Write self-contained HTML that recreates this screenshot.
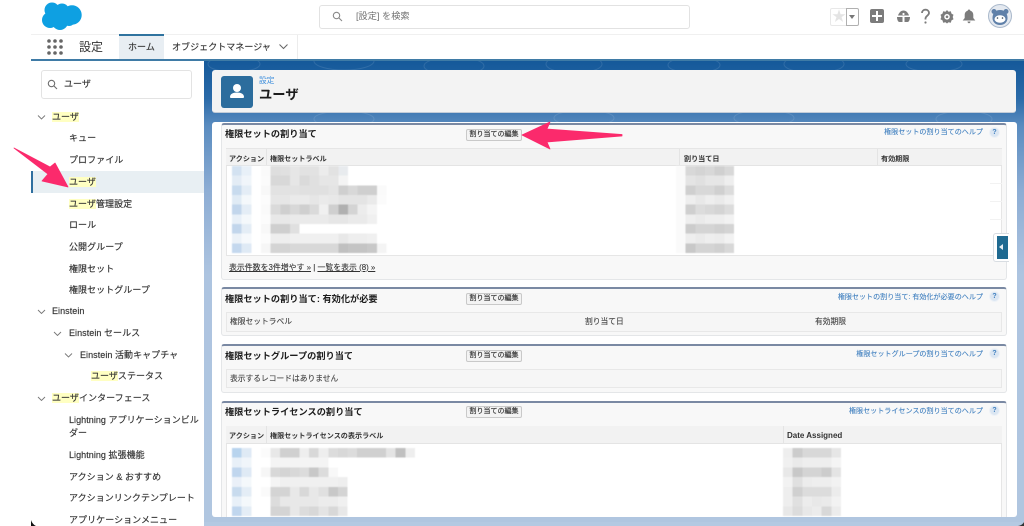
<!DOCTYPE html>
<html lang="ja">
<head>
<meta charset="utf-8">
<title>ユーザ</title>
<style>
html,body{margin:0;padding:0;background:#fff}
body{width:1024px;height:526px;overflow:hidden;position:relative;font-family:"Liberation Sans","Noto Sans CJK JP",sans-serif;color:#3e3e3c}
#w{position:absolute;left:0;top:0;width:1024px;height:526px;overflow:hidden;filter:blur(.35px)}
.a{position:absolute}
.t{position:absolute;white-space:nowrap;line-height:14px;height:14px}
.s{font-size:9px;color:#333;letter-spacing:.05px;-webkit-text-stroke:.15px #333}
mark{background:#ffffc2;color:inherit}
.p{position:absolute;left:221px;width:784px;background:#f8f8f8;border:1px solid #e4e6e8;border-top:2px solid #7a89a3;border-radius:3px;box-sizing:content-box}
.h{font-size:9.2px;font-weight:700;color:#1c1c1c}
.b{position:absolute;left:466px;width:54px;height:10px;background:#f3f3f3;border:1px solid #c9c9c9;border-radius:2px;font-size:7px;line-height:10px;text-align:center;color:#333;white-space:nowrap;-webkit-text-stroke:.15px #333}
.l{font-size:7.07px;color:#3f7fbf;text-align:right;right:41px;-webkit-text-stroke:.1px #3f7fbf}
.q{position:absolute;left:989px;width:9px;height:9px;border-radius:50%;background:#dbe6f2;border:1px solid #eef2f7;font-size:7px;line-height:9px;text-align:center;color:#3f7fbf;font-weight:700}
.th{font-size:7.1px;font-weight:700;color:#333}
.r{font-size:7.75px;color:#444;-webkit-text-stroke:.12px #444}
.g{filter:blur(.5px)}
</style>
</head>
<body>
<div id="w">
<!-- header -->
<div class="a" style="left:31px;top:34px;width:993px;height:1px;background:#f0f0f0"></div>
<svg class="a" style="left:40px;top:0" width="44" height="32" viewBox="0 0 44 32"><g fill="#0ea0e2"><circle cx="12" cy="10" r="7.5"/><circle cx="22" cy="10.5" r="7"/><circle cx="32" cy="15" r="9.700"/><circle cx="10" cy="20" r="8"/><circle cx="20" cy="22" r="8"/><circle cx="29" cy="20" r="6"/><rect x="10" y="10" width="20" height="12"/></g></svg>
<div class="a" style="left:319px;top:5px;width:369px;height:22px;border:1px solid #e2e2e2;border-radius:3px"></div>
<svg class="a" style="left:332px;top:11px" width="11" height="11" viewBox="0 0 11 11" fill="none" stroke="#8a8a8a" stroke-width="1.1"><circle cx="4.500" cy="4.500" r="3.200"/><path d="M7 7l3 3"/></svg>
<div class="t" style="left:356px;top:9px;font-size:9.2px;color:#707070">[設定] を検索</div>

<div class="a" style="left:830px;top:8px;width:15px;height:16px;border:1px solid #e8e8e8;border-radius:2px 0 0 2px"></div>
<div class="a" style="left:832px;top:8px;font-size:14px;line-height:17px;color:#e4e4e4">★</div>
<div class="a" style="left:846px;top:8px;width:11px;height:16px;border:1px solid #b0b0b0;border-radius:0 2px 2px 0"></div>
<div class="a" style="left:849px;top:15px;width:0;height:0;border:3px solid transparent;border-top:4px solid #777;border-bottom:0"></div>
<div class="a" style="left:870px;top:9px;width:14px;height:14px;background:#7c7c7c;border-radius:2px"></div>
<div class="a" style="left:876px;top:11px;width:2px;height:10px;background:#fff"></div>
<div class="a" style="left:872px;top:15px;width:10px;height:2px;background:#fff"></div>
<svg class="a" style="left:896px;top:9px" width="15" height="15" viewBox="0 0 15 15"><path d="M7.500 1.500c2.500 0 4.500 2 5.500 5H2C3 3.500 5 1.500 7.500 1.500z" fill="#7c7c7c"/><path d="M1 8h5.500v5H3.500C2 13 1 10.500 1 8zM14 8H8.500v5h3c1.500 0 2.500-2.500 2.500-5z" fill="#7c7c7c"/><circle cx="7.500" cy="5" r="1.100" fill="#fff"/></svg>
<svg class="a" style="left:920px;top:8px" width="11" height="17" viewBox="0 0 11 17" fill="none" stroke="#7c7c7c" stroke-width="1.800"><path d="M2 5c0-2 1.500-3.300 3.500-3.300S9 3 9 5c0 2.500-3.500 2.800-3.500 5.500v1"/><circle cx="5.500" cy="14.500" r="1.100" fill="#7c7c7c" stroke="none"/></svg>
<svg class="a" style="left:940px;top:9px" width="14" height="15" viewBox="0 0 14 15"><path d="M7 1l1.500 1.800 2.300-.5.700 2.300 2 1.100L12.700 8l.8 2.300-2 1.100-.7 2.300-2.300-.5L7 14.500l-1.500-1.300-2.300.5-.7-2.300-2-1.100L1.300 8 .5 5.700l2-1.100.7-2.300 2.300.5z" fill="#7c7c7c"/><circle cx="7" cy="7.800" r="2.800" fill="#fff"/><circle cx="7" cy="7.800" r="1.300" fill="#7c7c7c"/></svg>
<svg class="a" style="left:962px;top:9px" width="14" height="15" viewBox="0 0 14 15"><path d="M7 0.500c.8 0 1.300.5 1.300 1.200C10.500 2.300 11.300 4 11.300 6v3l2 2.500H.7l2-2.500V6c0-2 .8-3.700 3-4.300C5.700 1 6.200.5 7 .5z" fill="#7c7c7c"/><path d="M5.500 12.500h3c0 1-.7 1.700-1.500 1.700s-1.500-.7-1.500-1.700z" fill="#7c7c7c"/></svg>
<svg class="a" style="left:988px;top:4px" width="24" height="24" viewBox="0 0 24 24"><circle cx="12" cy="12" r="11.500" fill="#e4e9f0" stroke="#a9b8cb"/><circle cx="6" cy="7.500" r="2.500" fill="#5f80a9"/><circle cx="18" cy="7.500" r="2.500" fill="#5f80a9"/><path d="M4.500 14c0-5 3-8 7.500-8s7.500 3 7.500 8c0 4-3 7-7.500 7s-7.500-3-7.500-7z" fill="#5f80a9"/><ellipse cx="12" cy="15" rx="5.500" ry="3.800" fill="#fff"/><circle cx="9.500" cy="14" r=".8" fill="#345"/><circle cx="14.500" cy="14" r=".8" fill="#345"/></svg>

<!-- nav -->
<svg class="a" style="left:47px;top:39px" width="16" height="16" fill="#666"><circle cx="2" cy="2" r="1.800"/><circle cx="8" cy="2" r="1.800"/><circle cx="14" cy="2" r="1.800"/><circle cx="2" cy="8" r="1.800"/><circle cx="8" cy="8" r="1.800"/><circle cx="14" cy="8" r="1.800"/><circle cx="2" cy="14" r="1.800"/><circle cx="8" cy="14" r="1.800"/><circle cx="14" cy="14" r="1.800"/></svg>
<div class="t" style="left:79px;top:39px;font-size:12px;line-height:16px;height:16px;color:#333">設定</div>
<div class="a" style="left:119px;top:34px;width:45px;height:25px;background:#e8eef3;border-top:2px solid #2f739f;box-sizing:border-box"></div>
<div class="t s" style="left:128px;top:40px">ホーム</div>
<div class="t s" style="left:172px;top:40px">オブジェクトマネージャ</div>
<svg class="a" style="left:279px;top:44px" width="9" height="6" fill="none" stroke="#666" stroke-width="1"><path d="M.5 .5L4.500 4.500 8.500 .5"/></svg>
<div class="a" style="left:297px;top:35px;width:1px;height:24px;background:#ececec"></div>
<div class="a" style="left:31px;top:59px;width:993px;height:2px;background:#3f7ba6"></div>

<!-- main background -->
<div class="a" style="left:204px;top:61px;width:820px;height:465px;background:linear-gradient(180deg,#15599a 0,#2a6aa8 8%,#5a8cc0 14%,#8dadd4 28%,#adc4e0 46%,#b0c6e0 100%)"></div>
<svg class="a" style="left:204px;top:61px;opacity:.1" width="820" height="110" fill="none" stroke="#fff" stroke-width="1"><ellipse cx="30" cy="3" rx="26" ry="8"/><ellipse cx="140" cy="0" rx="30" ry="9"/><ellipse cx="250" cy="5" rx="30" ry="9"/><ellipse cx="370" cy="3" rx="28" ry="9"/><ellipse cx="490" cy="4" rx="26" ry="8"/><ellipse cx="610" cy="3" rx="30" ry="9"/><ellipse cx="730" cy="3" rx="28" ry="8"/><ellipse cx="380" cy="57" rx="30" ry="8"/><ellipse cx="140" cy="58" rx="30" ry="8"/><ellipse cx="560" cy="57" rx="30" ry="8"/><ellipse cx="760" cy="58" rx="28" ry="8"/></svg>

<!-- sidebar -->
<div class="a" style="left:31px;top:61px;width:173px;height:465px;background:#fff"></div>
<div class="a" style="left:41px;top:70px;width:149px;height:27px;border:1px solid #e3e3e3;border-radius:3px"></div>
<svg class="a" style="left:47px;top:79px" width="11" height="11" fill="none" stroke="#6e6e6e" stroke-width="1.100"><circle cx="4.500" cy="4.500" r="3.200"/><path d="M7 7l3 3"/></svg>
<div class="t s" style="left:64px;top:77px">ユーザ</div>

<div class="a" style="left:33px;top:171px;width:171px;height:22px;background:#e8eff3"></div>
<div class="a" style="left:31px;top:171px;width:2px;height:22px;background:#2f6f9f"></div>

<svg class="a" style="left:0;top:0" width="204" height="526" fill="none" stroke="#777" stroke-width=".9"><path d="M38 115.500l3.500 3.500 3.500-3.500M38 310l3.500 3.500 3.500-3.500M54 332l3.500 3.500 3.500-3.500M65 353.500l3.500 3.500 3.500-3.500M38 397l3.500 3.500 3.500-3.500"/></svg>

<div class="t s" style="left:52px;top:110px"><mark>ユーザ</mark></div>
<div class="t s" style="left:69px;top:131px">キュー</div>
<div class="t s" style="left:69px;top:153px">プロファイル</div>
<div class="t s" style="left:69px;top:175px"><mark>ユーザ</mark></div>
<div class="t s" style="left:69px;top:197px"><mark>ユーザ</mark>管理設定</div>
<div class="t s" style="left:69px;top:218px">ロール</div>
<div class="t s" style="left:69px;top:240px">公開グループ</div>
<div class="t s" style="left:69px;top:262px">権限セット</div>
<div class="t s" style="left:69px;top:283px">権限セットグループ</div>
<div class="t s" style="left:52px;top:304px">Einstein</div>
<div class="t s" style="left:69px;top:326px">Einstein セールス</div>
<div class="t s" style="left:80px;top:348px">Einstein 活動キャプチャ</div>
<div class="t s" style="left:91px;top:369px"><mark>ユーザ</mark>ステータス</div>
<div class="t s" style="left:52px;top:391px"><mark>ユーザ</mark>インターフェース</div>
<div class="t s" style="left:69px;top:413px">Lightning アプリケーションビル</div>
<div class="t s" style="left:69px;top:426px">ダー</div>
<div class="t s" style="left:69px;top:448px">Lightning 拡張機能</div>
<div class="t s" style="left:69px;top:470px">アクション &amp; おすすめ</div>
<div class="t s" style="left:69px;top:491px">アクションリンクテンプレート</div>
<div class="t s" style="left:69px;top:513px">アプリケーションメニュー</div>

<!-- page header -->
<div class="a" style="left:212px;top:70px;width:804px;height:43px;background:#f3f3f3;border-radius:3px;border-bottom:1px solid #c2ccd8;box-sizing:border-box"></div>
<div class="a" style="left:221px;top:76px;width:32px;height:32px;background:#2c6d9d;border-radius:3px"></div>
<svg class="a" style="left:228px;top:82px" width="18" height="18" fill="#fff"><circle cx="9" cy="6" r="4"/><path d="M2 15c0-3 3-4.500 7-4.500s7 1.500 7 4.500c0 .6-.4 1-1 1H3c-.6 0-1-.4-1-1z"/></svg>
<div class="t" style="left:259px;top:75px;font-size:7.700px;line-height:12px;height:12px;color:#3f8fdc">設定</div>
<div class="t" style="left:259px;top:85px;font-size:13.300px;line-height:19px;height:19px;font-weight:700;color:#1c1c1c">ユーザ</div>

<!-- card -->
<div class="a" style="left:212px;top:122px;width:805px;height:395px;background:#fff;border-radius:3px"></div>

<!-- panel 1 -->
<div class="p" style="top:123px;height:154px"></div>
<div class="t h" style="left:225px;top:127px">権限セットの割り当て</div>
<div class="b" style="top:129px">割り当ての編集</div>
<div class="t l" style="top:126px;right:41px">権限セットの割り当てのヘルプ</div>
<div class="q" style="top:127px">?</div>
<div class="a" style="left:226px;top:148px;width:776px;height:108px;background:#fff;border:1px solid #e6e6e6;box-sizing:border-box"></div>
<div class="a" style="left:226px;top:149px;width:776px;height:17px;background:#f2f2f2;border-bottom:1px solid #e4e4e4;box-sizing:border-box"></div>
<div class="a" style="left:266px;top:149px;width:1px;height:17px;background:#e4e4e4"></div>
<div class="a" style="left:679px;top:149px;width:1px;height:17px;background:#e4e4e4"></div>
<div class="a" style="left:877px;top:149px;width:1px;height:17px;background:#e4e4e4"></div>
<div class="t th" style="left:229px;top:152px">アクション</div>
<div class="t th" style="left:270px;top:152px">権限セットラベル</div>
<div class="t th" style="left:684px;top:152px">割り当て日</div>
<div class="t th" style="left:881px;top:152px">有効期限</div>

<svg class="a g" style="left:231.700px;top:166px" width="170" height="87" viewBox="0 0 17.600 9" shape-rendering="crispEdges" preserveAspectRatio="none">
<rect x="0" y="0" width="1" height="1" fill="#d3e2f1"/><rect x="1" y="0" width="1" height="1" fill="#e8f0f8"/><rect x="3" y="0" width="1" height="1" fill="#fafafa"/><rect x="4" y="0" width="1" height="1" fill="#dedede"/><rect x="5" y="0" width="1" height="1" fill="#e0e0e0"/><rect x="6" y="0" width="1" height="1" fill="#e6e6e6"/><rect x="7" y="0" width="2" height="1" fill="#e2e2e2"/><rect x="9" y="0" width="1" height="1" fill="#ececec"/><rect x="10" y="0" width="1" height="1" fill="#e2e2e2"/><rect x="11" y="0" width="1" height="1" fill="#e8ebee"/>
<rect x="0" y="1" width="1" height="1" fill="#e3ecf5"/><rect x="1" y="1" width="1" height="1" fill="#f0f5fa"/><rect x="3" y="1" width="1" height="1" fill="#fbfbfb"/><rect x="4" y="1" width="2" height="1" fill="#d8d8d8"/><rect x="6" y="1" width="1" height="1" fill="#e6e6e6"/><rect x="7" y="1" width="1" height="1" fill="#dadada"/><rect x="8" y="1" width="1" height="1" fill="#e0e0e0"/><rect x="9" y="1" width="2" height="1" fill="#e6e6e6"/><rect x="11" y="1" width="1" height="1" fill="#f4f4f4"/>
<rect x="0" y="2" width="1" height="1" fill="#c8dbee"/><rect x="1" y="2" width="1" height="1" fill="#e4edf6"/><rect x="3" y="2" width="1" height="1" fill="#f8f8f8"/><rect x="4" y="2" width="3" height="1" fill="#e2e2e2"/><rect x="7" y="2" width="3" height="1" fill="#e0e0e0"/><rect x="10" y="2" width="1" height="1" fill="#e4e4e4"/><rect x="11" y="2" width="1" height="1" fill="#cfcfcf"/><rect x="12" y="2" width="1" height="1" fill="#d8d8d8"/><rect x="13" y="2" width="2" height="1" fill="#cfcfcf"/><rect x="15" y="2" width="1" height="1" fill="#fafafa"/>
<rect x="0" y="3" width="1" height="1" fill="#e0ebf5"/><rect x="1" y="3" width="1" height="1" fill="#f4f8fb"/><rect x="3" y="3" width="1" height="1" fill="#fcfcfc"/><rect x="4" y="3" width="2" height="1" fill="#e6e6e6"/><rect x="6" y="3" width="2" height="1" fill="#eaeaea"/><rect x="8" y="3" width="1" height="1" fill="#e6e6e6"/><rect x="9" y="3" width="1" height="1" fill="#eaeaea"/><rect x="10" y="3" width="1" height="1" fill="#e8e8e8"/><rect x="11" y="3" width="3" height="1" fill="#e4e4e4"/><rect x="14" y="3" width="1" height="1" fill="#eaeaea"/><rect x="15" y="3" width="1" height="1" fill="#fbfbfb"/>
<rect x="0" y="4" width="1" height="1" fill="#c2d6ec"/><rect x="1" y="4" width="1" height="1" fill="#e4edf6"/><rect x="3" y="4" width="1" height="1" fill="#fafafa"/><rect x="4" y="4" width="1" height="1" fill="#dadada"/><rect x="5" y="4" width="1" height="1" fill="#cfcfcf"/><rect x="6" y="4" width="1" height="1" fill="#d8d8d8"/><rect x="7" y="4" width="1" height="1" fill="#cfcfcf"/><rect x="8" y="4" width="1" height="1" fill="#dadada"/><rect x="9" y="4" width="1" height="1" fill="#f0f0f0"/><rect x="10" y="4" width="1" height="1" fill="#cfcfcf"/><rect x="11" y="4" width="1" height="1" fill="#b0b0b0"/><rect x="12" y="4" width="1" height="1" fill="#d4d4d4"/><rect x="13" y="4" width="1" height="1" fill="#ececec"/><rect x="14" y="4" width="1" height="1" fill="#f4f4f4"/>
<rect x="0" y="5" width="1" height="1" fill="#e8f0f8"/><rect x="1" y="5" width="1" height="1" fill="#f4f8fb"/><rect x="3" y="5" width="1" height="1" fill="#fcfcfc"/><rect x="4" y="5" width="2" height="1" fill="#e8e8e8"/><rect x="6" y="5" width="4" height="1" fill="#eaeaea"/><rect x="10" y="5" width="2" height="1" fill="#e6e6e6"/><rect x="12" y="5" width="2" height="1" fill="#eaeaea"/><rect x="14" y="5" width="1" height="1" fill="#f0f0f0"/>
<rect x="0" y="6" width="1" height="1" fill="#c2d6ec"/><rect x="1" y="6" width="1" height="1" fill="#e4edf6"/><rect x="3" y="6" width="1" height="1" fill="#f8f8f8"/><rect x="4" y="6" width="2" height="1" fill="#cfcfcf"/><rect x="6" y="6" width="1" height="1" fill="#e0e0e0"/>
<rect x="0" y="7" width="1" height="1" fill="#ecf2f8"/><rect x="1" y="7" width="1" height="1" fill="#f6f9fc"/><rect x="3" y="7" width="1" height="1" fill="#fcfcfc"/><rect x="4" y="7" width="2" height="1" fill="#eeeeee"/><rect x="6" y="7" width="5" height="1" fill="#f0f0f0"/><rect x="11" y="7" width="1" height="1" fill="#e8e8e8"/><rect x="12" y="7" width="2" height="1" fill="#eeeeee"/><rect x="14" y="7" width="1" height="1" fill="#f0f0f0"/>
<rect x="0" y="8" width="1" height="1" fill="#c4d8ee"/><rect x="1" y="8" width="1" height="1" fill="#dfeaf5"/><rect x="3" y="8" width="1" height="1" fill="#f6f6f6"/><rect x="4" y="8" width="2" height="1" fill="#d4d4d4"/><rect x="6" y="8" width="5" height="1" fill="#d8d8d8"/><rect x="11" y="8" width="1" height="1" fill="#c0c0c0"/><rect x="12" y="8" width="2" height="1" fill="#c4c4c4"/><rect x="14" y="8" width="1" height="1" fill="#c8c8c8"/><rect x="15" y="8" width="1" height="1" fill="#f4f4f4"/>
</svg>

<svg class="a g" style="left:676px;top:166px" width="58" height="87" viewBox="0 0 6 9" shape-rendering="crispEdges" preserveAspectRatio="none">
<rect x="0" y="0" width="1" height="9" fill="#fafafa"/>
<rect x="1" y="0" width="1" height="1" fill="#d8d8d8"/><rect x="2" y="0" width="1" height="1" fill="#d4d4d4"/><rect x="3" y="0" width="1" height="1" fill="#d8d8d8"/><rect x="4" y="0" width="1" height="1" fill="#d0d0d0"/><rect x="5" y="0" width="1" height="1" fill="#d8d8d8"/>
<rect x="1" y="1" width="1" height="1" fill="#e4e4e4"/><rect x="2" y="1" width="1" height="1" fill="#e0e0e0"/><rect x="3" y="1" width="2" height="1" fill="#e6e6e6"/><rect x="5" y="1" width="1" height="1" fill="#eeeeee"/>
<rect x="1" y="2" width="1" height="1" fill="#cfcfcf"/><rect x="2" y="2" width="2" height="1" fill="#d8d8d8"/><rect x="4" y="2" width="1" height="1" fill="#d0d0d0"/><rect x="5" y="2" width="1" height="1" fill="#dcdcdc"/>
<rect x="1" y="3" width="1" height="1" fill="#eeeeee"/><rect x="2" y="3" width="1" height="1" fill="#e8e8e8"/><rect x="3" y="3" width="1" height="1" fill="#eeeeee"/><rect x="4" y="3" width="1" height="1" fill="#eaeaea"/><rect x="5" y="3" width="1" height="1" fill="#f0f0f0"/>
<rect x="1" y="4" width="1" height="1" fill="#cfcfcf"/><rect x="2" y="4" width="1" height="1" fill="#dcdcdc"/><rect x="3" y="4" width="1" height="1" fill="#d8d8d8"/><rect x="4" y="4" width="1" height="1" fill="#d4d4d4"/><rect x="5" y="4" width="1" height="1" fill="#dcdcdc"/>
<rect x="1" y="5" width="1" height="1" fill="#eeeeee"/><rect x="2" y="5" width="1" height="1" fill="#eaeaea"/><rect x="3" y="5" width="2" height="1" fill="#eeeeee"/><rect x="5" y="5" width="1" height="1" fill="#f2f2f2"/>
<rect x="1" y="6" width="1" height="1" fill="#cccccc"/><rect x="2" y="6" width="2" height="1" fill="#d4d4d4"/><rect x="4" y="6" width="1" height="1" fill="#d0d0d0"/><rect x="5" y="6" width="1" height="1" fill="#d4d4d4"/>
<rect x="1" y="7" width="1" height="1" fill="#eeeeee"/><rect x="2" y="7" width="1" height="1" fill="#eaeaea"/><rect x="3" y="7" width="1" height="1" fill="#eeeeee"/><rect x="4" y="7" width="1" height="1" fill="#ececec"/><rect x="5" y="7" width="1" height="1" fill="#f2f2f2"/>
<rect x="1" y="8" width="1" height="1" fill="#c8c8c8"/><rect x="2" y="8" width="2" height="1" fill="#d4d4d4"/><rect x="4" y="8" width="1" height="1" fill="#d0d0d0"/><rect x="5" y="8" width="1" height="1" fill="#d8d8d8"/>
</svg>

<div class="a" style="left:990px;top:183px;width:12px;height:1px;background:#f2f2f2"></div>
<div class="a" style="left:990px;top:201px;width:12px;height:1px;background:#f2f2f2"></div>
<div class="a" style="left:990px;top:219px;width:12px;height:1px;background:#f2f2f2"></div>

<div class="t" style="left:229px;top:261px;font-size:7.900px;color:#333;-webkit-text-stroke:.1px #333"><span style="text-decoration:underline">表示件数を3件増やす »</span> | <span style="text-decoration:underline">一覧を表示 (8) »</span></div>

<div class="a" style="left:993px;top:233px;width:16px;height:29px;background:#fff;border:1px solid #d8dde2;border-right:0;border-radius:3px 0 0 3px;box-sizing:border-box"></div>
<div class="a" style="left:997px;top:236px;width:11px;height:23px;background:#1f6a91"></div>
<div class="a" style="left:999px;top:244px;width:0;height:0;border:3.500px solid transparent;border-right:4px solid #e6edf2;border-left:0"></div>

<!-- panel 2 -->
<div class="p" style="top:287px;height:46px"></div>
<div class="t h" style="left:225px;top:292px">権限セットの割り当て: 有効化が必要</div>
<div class="b" style="top:293px">割り当ての編集</div>
<div class="t l" style="top:290.500px">権限セットの割り当て: 有効化が必要のヘルプ</div>
<div class="q" style="top:291px">?</div>
<div class="a" style="left:226px;top:312px;width:776px;height:20px;background:#f6f6f6;border:1px solid #e8e8e8;box-sizing:border-box"></div>
<div class="t r" style="left:230px;top:315px">権限セットラベル</div>
<div class="t r" style="left:585px;top:315px">割り当て日</div>
<div class="t r" style="left:815px;top:315px">有効期限</div>

<!-- panel 3 -->
<div class="p" style="top:344px;height:46px"></div>
<div class="t h" style="left:225px;top:348.500px">権限セットグループの割り当て</div>
<div class="b" style="top:350px">割り当ての編集</div>
<div class="t l" style="top:347.500px">権限セットグループの割り当てのヘルプ</div>
<div class="q" style="top:348px">?</div>
<div class="a" style="left:226px;top:369px;width:776px;height:19px;background:#f6f6f6;border:1px solid #e8e8e8;box-sizing:border-box"></div>
<div class="t r" style="left:230px;top:372px">表示するレコードはありません</div>

<!-- panel 4 -->
<div class="p" style="top:401px;height:125px"></div>
<div class="t h" style="left:225px;top:405px">権限セットライセンスの割り当て</div>
<div class="b" style="top:406px">割り当ての編集</div>
<div class="t l" style="top:404.500px">権限セットライセンスの割り当てのヘルプ</div>
<div class="q" style="top:405px">?</div>
<div class="a" style="left:226px;top:426px;width:776px;height:100px;background:#fff;border:1px solid #e6e6e6;box-sizing:border-box"></div>
<div class="a" style="left:226px;top:426px;width:776px;height:18px;background:#f2f2f2;border-bottom:1px solid #e4e4e4;box-sizing:border-box"></div>
<div class="a" style="left:266px;top:426px;width:1px;height:18px;background:#e4e4e4"></div>
<div class="a" style="left:783px;top:426px;width:1px;height:18px;background:#e4e4e4"></div>
<div class="t th" style="left:229px;top:429px">アクション</div>
<div class="t th" style="left:270px;top:429px">権限セットライセンスの表示ラベル</div>
<div class="t" style="left:787px;top:429px;font-size:8px;font-weight:700;color:#333">Date Assigned</div>

<svg class="a g" style="left:231.700px;top:447.700px" width="183" height="68" viewBox="0 0 19 7" shape-rendering="crispEdges" preserveAspectRatio="none">
<rect x="0" y="0" width="1" height="1" fill="#b8d4ee"/><rect x="1" y="0" width="1" height="1" fill="#dfeaf5"/><rect x="3" y="0" width="1" height="1" fill="#fbfbfb"/><rect x="4" y="0" width="1" height="1" fill="#e8e8e8"/><rect x="5" y="0" width="2" height="1" fill="#d0d0d0"/><rect x="7" y="0" width="1" height="1" fill="#eeeeee"/><rect x="8" y="0" width="1" height="1" fill="#d8d8d8"/><rect x="9" y="0" width="1" height="1" fill="#eeeeee"/><rect x="10" y="0" width="1" height="1" fill="#dcdcdc"/><rect x="11" y="0" width="1" height="1" fill="#d8d8d8"/><rect x="12" y="0" width="1" height="1" fill="#dcdcdc"/><rect x="13" y="0" width="3" height="1" fill="#d0d0d0"/><rect x="16" y="0" width="1" height="1" fill="#e4e4e4"/><rect x="17" y="0" width="1" height="1" fill="#c0c0c0"/><rect x="18" y="0" width="1" height="1" fill="#eeeeee"/>
<rect x="0" y="1" width="1" height="1" fill="#e8f0f8"/><rect x="1" y="1" width="1" height="1" fill="#f0f5fa"/><rect x="4" y="1" width="6" height="1" fill="#f4f4f4"/>
<rect x="0" y="2" width="1" height="1" fill="#c0d6ee"/><rect x="1" y="2" width="1" height="1" fill="#dfeaf5"/><rect x="3" y="2" width="1" height="1" fill="#f6f6f6"/><rect x="4" y="2" width="1" height="1" fill="#d8d8d8"/><rect x="5" y="2" width="1" height="1" fill="#d4d4d4"/><rect x="6" y="2" width="1" height="1" fill="#d8d8d8"/><rect x="7" y="2" width="1" height="1" fill="#dcdcdc"/><rect x="8" y="2" width="1" height="1" fill="#c8c8c8"/><rect x="9" y="2" width="1" height="1" fill="#dcdcdc"/><rect x="10" y="2" width="1" height="1" fill="#f8f8f8"/>
<rect x="0" y="3" width="1" height="1" fill="#eaf0f8"/><rect x="1" y="3" width="1" height="1" fill="#f4f8fb"/><rect x="4" y="3" width="1" height="1" fill="#f4f4f4"/><rect x="5" y="3" width="6" height="1" fill="#f0f0f0"/><rect x="11" y="3" width="1" height="1" fill="#eeeeee"/>
<rect x="0" y="4" width="1" height="1" fill="#c8dbee"/><rect x="1" y="4" width="1" height="1" fill="#e4edf6"/><rect x="3" y="4" width="1" height="1" fill="#fafafa"/><rect x="4" y="4" width="2" height="1" fill="#d4d4d4"/><rect x="6" y="4" width="1" height="1" fill="#e8e8e8"/><rect x="7" y="4" width="1" height="1" fill="#d8d8d8"/><rect x="8" y="4" width="1" height="1" fill="#e8e8e8"/><rect x="9" y="4" width="1" height="1" fill="#e0e0e0"/><rect x="10" y="4" width="1" height="1" fill="#c8c8c8"/><rect x="11" y="4" width="1" height="1" fill="#d4d4d4"/>
<rect x="0" y="5" width="1" height="1" fill="#e8f0f8"/><rect x="1" y="5" width="1" height="1" fill="#f4f8fb"/><rect x="4" y="5" width="1" height="1" fill="#dcdcdc"/><rect x="5" y="5" width="4" height="1" fill="#e8e8e8"/><rect x="9" y="5" width="2" height="1" fill="#ececec"/><rect x="11" y="5" width="1" height="1" fill="#f0f0f0"/>
<rect x="0" y="6" width="1" height="1" fill="#c0d6ee"/><rect x="1" y="6" width="1" height="1" fill="#e4edf6"/><rect x="4" y="6" width="2" height="1" fill="#d4d4d4"/><rect x="6" y="6" width="1" height="1" fill="#e8e8e8"/><rect x="7" y="6" width="1" height="1" fill="#dcdcdc"/><rect x="8" y="6" width="1" height="1" fill="#d8d8d8"/><rect x="9" y="6" width="1" height="1" fill="#e4e4e4"/><rect x="10" y="6" width="1" height="1" fill="#d8d8d8"/><rect x="11" y="6" width="1" height="1" fill="#e8e8e8"/>
</svg>

<svg class="a g" style="left:782.700px;top:447.700px" width="58" height="68" viewBox="0 0 6 7" shape-rendering="crispEdges" preserveAspectRatio="none">
<rect x="0" y="0" width="1" height="1" fill="#eeeeee"/><rect x="1" y="0" width="1" height="1" fill="#cccccc"/><rect x="2" y="0" width="3" height="1" fill="#d8d8d8"/><rect x="5" y="0" width="1" height="1" fill="#e6e6e6"/>
<rect x="0" y="1" width="1" height="1" fill="#f0f0f0"/><rect x="1" y="1" width="1" height="1" fill="#eaeaea"/><rect x="2" y="1" width="3" height="1" fill="#eeeeee"/><rect x="5" y="1" width="1" height="1" fill="#f4f4f4"/>
<rect x="0" y="2" width="1" height="1" fill="#e8e8e8"/><rect x="1" y="2" width="1" height="1" fill="#c8c8c8"/><rect x="2" y="2" width="2" height="1" fill="#d4d4d4"/><rect x="4" y="2" width="1" height="1" fill="#cccccc"/><rect x="5" y="2" width="1" height="1" fill="#e4e4e4"/>
<rect x="0" y="3" width="1" height="1" fill="#f2f2f2"/><rect x="1" y="3" width="1" height="1" fill="#e0e0e0"/><rect x="2" y="3" width="1" height="1" fill="#ececec"/><rect x="3" y="3" width="2" height="1" fill="#eeeeee"/><rect x="5" y="3" width="1" height="1" fill="#f2f2f2"/>
<rect x="0" y="4" width="1" height="1" fill="#eeeeee"/><rect x="1" y="4" width="1" height="1" fill="#d0d0d0"/><rect x="2" y="4" width="3" height="1" fill="#dcdcdc"/><rect x="5" y="4" width="1" height="1" fill="#ececec"/>
<rect x="0" y="5" width="1" height="1" fill="#eeeeee"/><rect x="1" y="5" width="1" height="1" fill="#e0e0e0"/><rect x="2" y="5" width="1" height="1" fill="#ececec"/><rect x="3" y="5" width="1" height="1" fill="#e8e8e8"/><rect x="4" y="5" width="1" height="1" fill="#eaeaea"/><rect x="5" y="5" width="1" height="1" fill="#f2f2f2"/>
<rect x="0" y="6" width="1" height="1" fill="#e8e8e8"/><rect x="1" y="6" width="1" height="1" fill="#dcdcdc"/><rect x="2" y="6" width="1" height="1" fill="#e8e8e8"/><rect x="3" y="6" width="1" height="1" fill="#ececec"/><rect x="4" y="6" width="1" height="1" fill="#d8d8d8"/><rect x="5" y="6" width="1" height="1" fill="#ececec"/>
</svg>

<!-- bottom strip over panel 4 -->
<div class="a" style="left:212px;top:517px;width:805px;height:9px;background:#b0c6e0"></div>
<div class="a" style="left:204px;top:522px;width:820px;height:4px;background:#b4c9e2"></div>

<!-- window corners -->
<svg class="a" style="left:31px;top:520px" width="6" height="6"><path d="M0 0v6h5C3 5 1 3 0 0z" fill="#111"/></svg>
<svg class="a" style="left:1018px;top:522px" width="6" height="4"><path d="M6 0v4H0C3 3.500 5 2 6 0z" fill="#333"/></svg>

<!-- arrows -->
<svg class="a" style="left:0;top:0" width="1024" height="526"><path d="M14 148L50 167 55 163 68 187 42 181 48 174z" fill="#fb2a6c" stroke="#fb2a6c" stroke-width=".8" stroke-linejoin="round"/><path d="M522 135L550 122 547 129 622 134.500 622 136 547 142 550 149z" fill="#fb2a6c" stroke="#fb2a6c" stroke-width=".8" stroke-linejoin="round"/></svg>
</div>
</body>
</html>
